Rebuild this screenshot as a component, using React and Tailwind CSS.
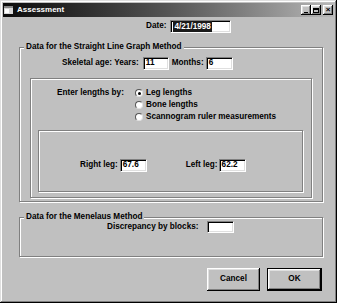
import React from 'react';

// ── Win9x style helpers ─────────────────────────────────────────────────────
const etched = 'border border-[#808080] shadow-[inset_1px_1px_0_#fff,1px_1px_0_#fff]';
const sunken =
  'bg-white border border-t-[#808080] border-l-[#808080] border-b-white border-r-white shadow-[inset_1px_1px_0_#000,inset_-1px_-1px_0_#dfdfdf]';
const raised =
  'bg-[#c0c0c0] shadow-[inset_-1px_-1px_0_#000,inset_1px_1px_0_#fff,inset_-2px_-2px_0_#808080,inset_2px_2px_0_#dfdfdf]';

function TextBox({ width, height = 13, children }) {
  return (
    <div className={`${sunken} flex items-center pl-[2px] overflow-hidden`} style={{ width, height }}>
      {children}
    </div>
  );
}

function Radio({ checked, label }) {
  return (
    <div className="h-[12px] flex items-center">
      <div className="w-[8px] h-[8px] rounded-full bg-white border border-t-[#555] border-l-[#555] border-b-[#e0e0e0] border-r-[#e0e0e0] flex items-center justify-center">
        {checked && <div className="w-[3px] h-[3px] rounded-full bg-black" />}
      </div>
      <span className="ml-[3px]">{label}</span>
    </div>
  );
}

function GroupBox({ title, className, children }) {
  return (
    <div className={`relative ${etched} ${className}`}>
      <span className="absolute -top-[6px] left-[4px] px-[2px] bg-[#c0c0c0] leading-[10px]">{title}</span>
      {children}
    </div>
  );
}

function CaptionButton({ children }) {
  return (
    <div className={`${raised} w-[10px] h-[10px] flex items-center justify-center`}>{children}</div>
  );
}

// ── Title bar ───────────────────────────────────────────────────────────────
function TitleBar() {
  return (
    <div className="mx-[3px] mt-[3px] h-[14px] flex items-center bg-gradient-to-r from-[#0c0c0c] via-[#555] to-[#b8b8b8]">
      <svg width="9" height="8" viewBox="0 0 9 8" className="ml-[1px]">
        <rect x="0" y="0" width="9" height="8" fill="#d8d8d8" />
        <rect x="0" y="0" width="9" height="2" fill="#888" />
        <rect x="1" y="3" width="4" height="4" fill="#fff" />
      </svg>
      <span className="ml-[4px] text-white text-[8px] font-bold">Assessment</span>
      <div className="ml-auto mr-[1px] flex items-center">
        <CaptionButton>
          <div className="w-[4px] h-[1px] bg-black mt-[4px]" />
        </CaptionButton>
        <CaptionButton>
          <div className="w-[6px] h-[5px] border border-black border-t-2" />
        </CaptionButton>
        <div className="ml-[2px]">
          <CaptionButton>
            <span className="text-[8px] leading-[8px] font-bold">×</span>
          </CaptionButton>
        </div>
      </div>
    </div>
  );
}

// ── Root export ─────────────────────────────────────────────────────────────
export default function App() {
  return (
    <div className="w-[337px] h-[303px] bg-[#c0c0c0] flex flex-col font-['Liberation_Sans',Arial,sans-serif] font-bold text-[8.2px] text-black shadow-[inset_-1px_-1px_0_#000,inset_1px_1px_0_#dfdfdf,inset_-2px_-2px_0_#808080,inset_2px_2px_0_#fff]">
      <TitleBar />

      {/* Date */}
      <div className="mt-[3px] ml-[146px] h-[13px] flex items-center">
        <span>Date:</span>
        <div className="ml-[4px]">
          <TextBox width={61}>
            <span className="bg-[#1a1a1a] text-white px-[1px] leading-[11px]">4/21/1998</span>
          </TextBox>
        </div>
      </div>

      {/* Straight line graph method */}
      <GroupBox title="Data for the Straight Line Graph Method" className="mt-[14px] ml-[19px] w-[304px] h-[155px] flex flex-col">
        <div className="mt-[9px] ml-[42px] h-[13px] flex items-center">
          <span>Skeletal age: Years:</span>
          <div className="ml-[4px]">
            <TextBox width={26}>11</TextBox>
          </div>
          <span className="ml-[3px]">Months:</span>
          <div className="ml-[2px]">
            <TextBox width={27}>6</TextBox>
          </div>
        </div>

        <div className={`${etched} mt-[8px] ml-[10px] w-[282px] h-[120px] flex flex-col`}>
          <div className="mt-[8px] ml-[26px] flex items-start">
            <span className="w-[78px] h-[12px] flex items-center">Enter lengths by:</span>
            <div className="flex flex-col">
              <Radio checked label="Leg lengths" />
              <Radio label="Bone lengths" />
              <Radio label="Scannogram ruler measurements" />
            </div>
          </div>

          <div className={`${etched} mt-[7px] ml-[7px] w-[265px] h-[62px]`}>
            <div className="mt-[28px] ml-[41px] h-[13px] flex items-center">
              <span>Right leg:</span>
              <div className="ml-[2px]">
                <TextBox width={27}>67.6</TextBox>
              </div>
              <span className="ml-[39px]">Left leg:</span>
              <div className="ml-[1px]">
                <TextBox width={27}>62.2</TextBox>
              </div>
            </div>
          </div>
        </div>
      </GroupBox>

      {/* Menelaus method */}
      <GroupBox title="Data for the Menelaus Method" className="mt-[15px] ml-[19px] w-[304px] h-[40px]">
        <div className="mt-[3px] ml-[87px] h-[12px] flex items-center">
          <span>Discrepancy by blocks:</span>
          <div className="ml-[9px]">
            <TextBox width={27} height={12} />
          </div>
        </div>
      </GroupBox>

      {/* Buttons */}
      <div className="mt-[11px] mr-[15px] flex justify-end gap-[7px]">
        <button className={`${raised} w-[53px] h-[23px] font-bold text-[8.2px]`}>Cancel</button>
        <div className="border border-black">
          <button className={`${raised} w-[53px] h-[21px] font-bold text-[8.2px] block`}>OK</button>
        </div>
      </div>
    </div>
  );
}
